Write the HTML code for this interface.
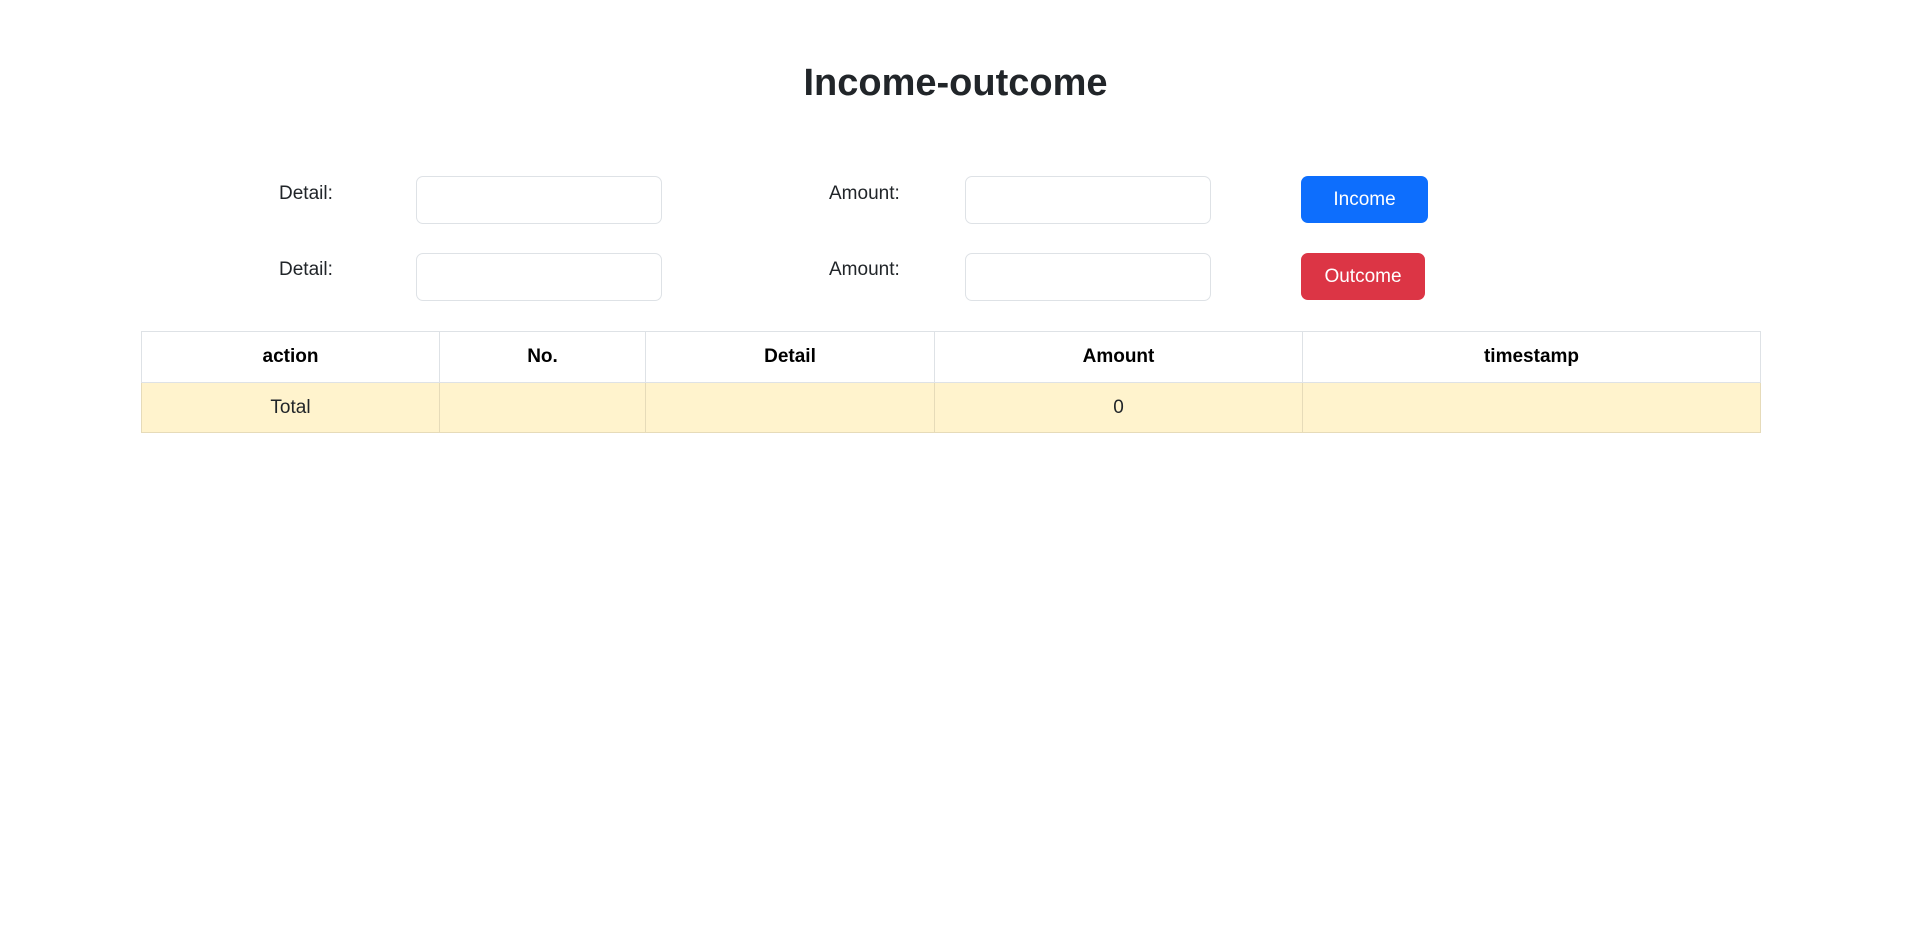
<!DOCTYPE html>
<html><head><meta charset="utf-8"><style>
*{box-sizing:border-box;margin:0;padding:0}
body{width:1911px;height:935px;background:#fff;font-family:"Liberation Sans",sans-serif;color:#212529;position:relative;overflow:hidden}
h1{position:absolute;top:58px;left:0;width:1911px;text-align:center;font-size:38px;font-weight:600;line-height:50px}
.lbl{position:absolute;font-size:19px;line-height:24px}
.inp{position:absolute;width:246px;height:48px;border:1px solid #dee2e6;border-radius:7px;background:#fff}
.btn{position:absolute;height:47px;border-radius:7px;color:#fff;font-size:19px;line-height:47px;text-align:center}
table{position:absolute;left:141px;top:331px;width:1620px;border-collapse:collapse;font-size:19px;table-layout:fixed}
td,th{border:1px solid #dee2e6;height:51px;text-align:center;color:#000}
th{font-weight:bold}
tr.t td{background:#fff3cd;border-color:#e6dbb9;color:#212529;height:50px}
</style></head><body>
<h1>Income-outcome</h1>
<div class="lbl" style="left:279px;top:182px">Detail:</div>
<div class="inp" style="left:416px;top:176px"></div>
<div class="lbl" style="left:829px;top:182px">Amount:</div>
<div class="inp" style="left:965px;top:176px"></div>
<div class="btn" style="left:1301px;top:176px;width:127px;background:#0d6efd">Income</div>
<div class="lbl" style="left:279px;top:258px">Detail:</div>
<div class="inp" style="left:416px;top:253px"></div>
<div class="lbl" style="left:829px;top:258px">Amount:</div>
<div class="inp" style="left:965px;top:253px"></div>
<div class="btn" style="left:1301px;top:253px;width:124px;background:#dc3545">Outcome</div>
<table>
<col style="width:298px"><col style="width:206px"><col style="width:289px"><col style="width:368px"><col>
<tr><th>action</th><th>No.</th><th>Detail</th><th>Amount</th><th>timestamp</th></tr>
<tr class="t"><td>Total</td><td></td><td></td><td>0</td><td></td></tr>
</table>
</body></html>
